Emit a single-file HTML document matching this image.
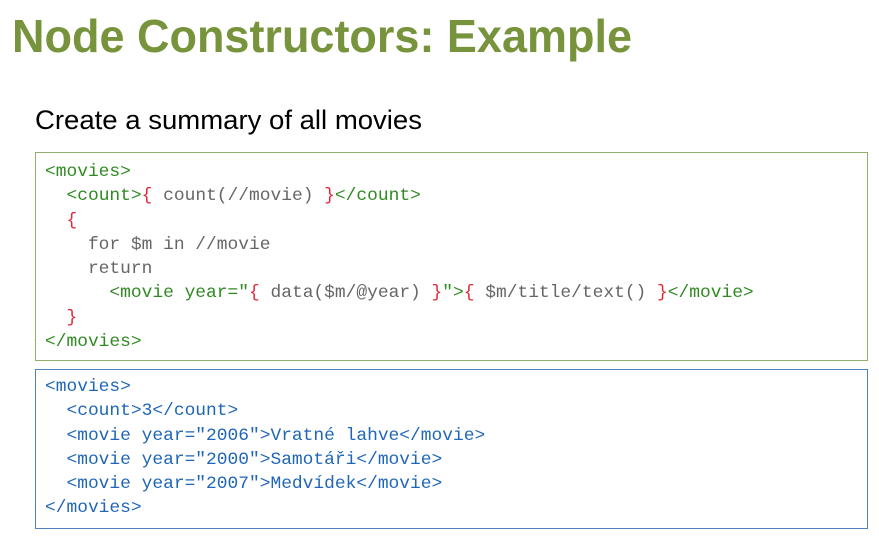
<!DOCTYPE html>
<html><head><meta charset="utf-8"><style>
body{margin:0;width:879px;height:539px;background:#fff;position:relative;overflow:hidden}
svg{position:absolute;left:0;top:0}
.box{position:absolute;left:35px;width:833px;border:1.5px solid #8fb06a;box-sizing:border-box}
pre{margin:0;position:absolute;left:9px;font-family:"Liberation Mono",monospace;font-size:17.9px;line-height:24.25px;color:#666}
.g{color:#2f8a22}.r{color:#e02a38}.b{color:#1f66b8}
</style></head><body>
<svg width="879" height="150">
<text x="12" y="52" textLength="620" lengthAdjust="spacingAndGlyphs" font-family="Liberation Sans, sans-serif" font-weight="bold" font-size="46" fill="#77933c">Node Constructors: Example</text>
<text x="35" y="129" textLength="387" lengthAdjust="spacingAndGlyphs" font-family="Liberation Sans, sans-serif" font-size="27" fill="#000">Create a summary of all movies</text>
</svg>
<div class="box" style="top:152px;height:209px">
<pre style="top:7px"><span class="g">&lt;movies&gt;</span>
  <span class="g">&lt;count&gt;</span><span class="r">{</span> count(//movie) <span class="r">}</span><span class="g">&lt;/count&gt;</span>
  <span class="r">{</span>
    for $m in //movie
    return
      <span class="g">&lt;movie year="</span><span class="r">{</span> data($m/@year) <span class="r">}</span><span class="g">"&gt;</span><span class="r">{</span> $m/title/text() <span class="r">}</span><span class="g">&lt;/movie&gt;</span>
  <span class="r">}</span>
<span class="g">&lt;/movies&gt;</span></pre></div>
<div class="box" style="top:369px;height:160px;border-color:#4f81bd">
<pre class="b" style="top:5px">&lt;movies&gt;
  &lt;count&gt;3&lt;/count&gt;
  &lt;movie year="2006"&gt;Vratné lahve&lt;/movie&gt;
  &lt;movie year="2000"&gt;Samotáři&lt;/movie&gt;
  &lt;movie year="2007"&gt;Medvídek&lt;/movie&gt;
&lt;/movies&gt;</pre></div>
</body></html>
